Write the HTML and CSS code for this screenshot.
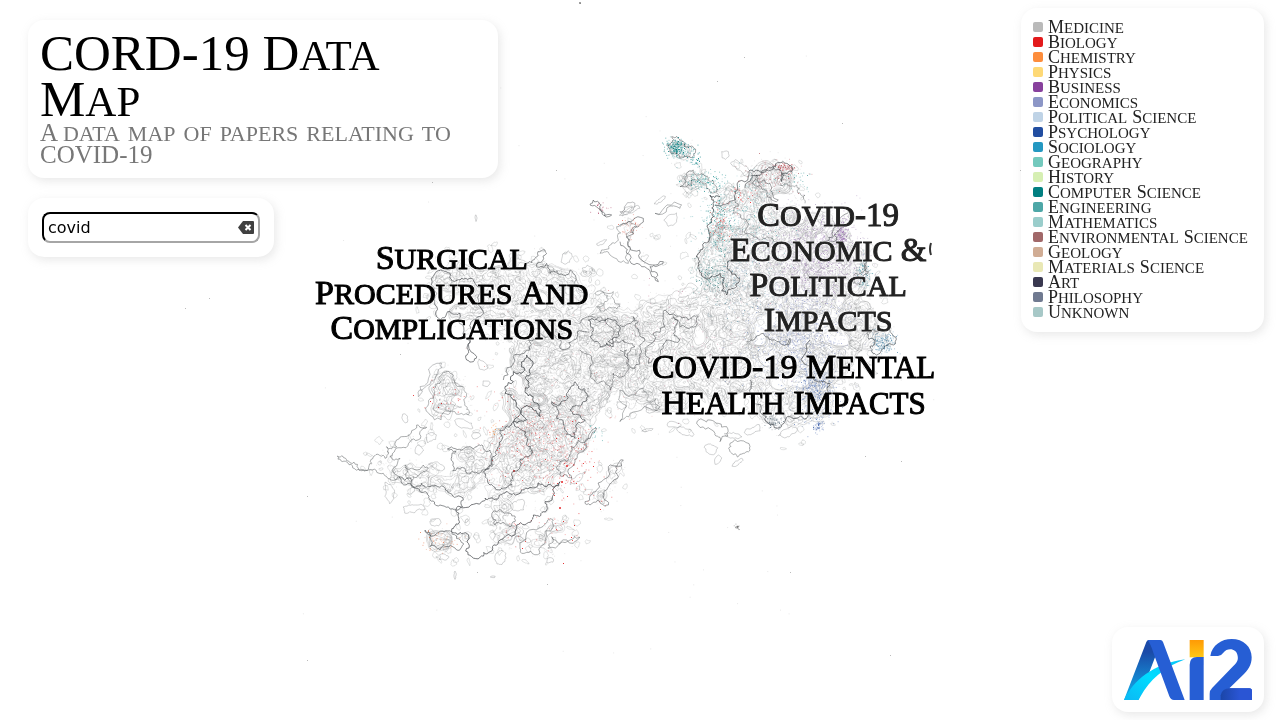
FILE: index.html
```html
<!DOCTYPE html>
<html lang="en">
<head>
<meta charset="utf-8">
<title>CORD-19 Data Map</title>
<link rel="stylesheet" href="styles.css">
</head>
<body>
<div class="map">
  <canvas class="map-canvas" id="map" width="1280" height="720"></canvas>
  <div class="label label-surgical"><span class="word">Surgical</span><br><span class="word">Procedures</span> <span class="word">And</span><br><span class="word">Complications</span></div>
  <div class="label label-economic"><span class="word">Covid</span>-19<br><span class="word">Economic</span> &amp;<br><span class="word">Political</span><br><span class="word">Impacts</span></div>
  <div class="label label-mental"><span class="word">Covid</span>-19 <span class="word">Mental</span><br><span class="word">Health</span> <span class="word">Impacts</span></div>
</div>
<main class="overlay">
  <div class="side">
    <header class="card title-card">
      <h1>CORD-19 <span class="word">Data</span><br><span class="word">Map</span></h1>
      <p>A <span class="small">data map of papers relating to</span> COVID-19</p>
    </header>
    <form class="card search-card" role="search">
      <input class="search" type="text" value="covid" aria-label="Search papers">
      <button class="clear" type="reset" aria-label="Clear search">
        <svg viewBox="0 0 16 13" width="16" height="13"><path d="M5 0H15Q16 0 16 1V12Q16 13 15 13H5L0 6.500Z" fill="#404040"/><path d="M7.500 4L12.500 9M12.500 4L7.500 9" stroke="#fff" stroke-width="2"/></svg>
      </button>
    </form>
  </div>
  <div class="side side-right">
    <ul class="card legend">
      <li><i class="swatch c1"></i><span class="word">Medicine</span></li>
      <li><i class="swatch c2"></i><span class="word">Biology</span></li>
      <li><i class="swatch c3"></i><span class="word">Chemistry</span></li>
      <li><i class="swatch c4"></i><span class="word">Physics</span></li>
      <li><i class="swatch c5"></i><span class="word">Business</span></li>
      <li><i class="swatch c6"></i><span class="word">Economics</span></li>
      <li><i class="swatch c7"></i><span class="word">Political</span> <span class="word">Science</span></li>
      <li><i class="swatch c8"></i><span class="word">Psychology</span></li>
      <li><i class="swatch c9"></i><span class="word">Sociology</span></li>
      <li><i class="swatch c10"></i><span class="word">Geography</span></li>
      <li><i class="swatch c11"></i><span class="word">History</span></li>
      <li><i class="swatch c12"></i><span class="word">Computer</span> <span class="word">Science</span></li>
      <li><i class="swatch c13"></i><span class="word">Engineering</span></li>
      <li><i class="swatch c14"></i><span class="word">Mathematics</span></li>
      <li><i class="swatch c15"></i><span class="word">Environmental</span> <span class="word">Science</span></li>
      <li><i class="swatch c16"></i><span class="word">Geology</span></li>
      <li><i class="swatch c17"></i><span class="word">Materials</span> <span class="word">Science</span></li>
      <li><i class="swatch c18"></i><span class="word">Art</span></li>
      <li><i class="swatch c19"></i><span class="word">Philosophy</span></li>
      <li><i class="swatch c20"></i><span class="word">Unknown</span></li>
    </ul>
    <div class="card logo-card">
      <svg class="logo" viewBox="72 57 384 183" role="img" aria-label="Ai2">
        <defs>
          <linearGradient id="leg" x1="0" y1="0" x2="0" y2="1"><stop offset="0.2" stop-color="#1b4aa8"/><stop offset="1" stop-color="#10b4ee"/></linearGradient>
          <linearGradient id="swoosh" x1="0" y1="1" x2="1" y2="0"><stop offset="0" stop-color="#0bb8f4"/><stop offset="0.5" stop-color="#00dcff"/><stop offset="1" stop-color="#08c4f8"/></linearGradient>
          <linearGradient id="dot" x1="0" y1="0" x2="0" y2="1"><stop offset="0" stop-color="#ff9a05"/><stop offset="1" stop-color="#ffc814"/></linearGradient>
          <linearGradient id="base"><stop offset="0" stop-color="#1b46a8"/><stop offset="0.6" stop-color="#2a55d4"/></linearGradient>
        </defs>
        <path d="M72 240L139 66Q141 60 147 60L168 104L116 240Z" fill="url(#leg)"/>
        <path d="M72 240C100 182 158 132 256 118C190 142 150 180 121 230Q116 240 106 240Z" fill="url(#swoosh)"/>
        <path d="M143 60H181Q187 60 189 66L254 240H222Q212 240 208 229L160 98Q152 72 143 60Z" fill="#265ed4"/>
        <path d="M269 60H311V112H269Z" fill="url(#dot)"/>
        <path d="M269 240V134Q269 112 291 111H311V240Z" fill="#265ed4"/>
        <path d="M331 108C336 75 365 57 395 57C430 57 455 80 455 112C455 135 445 150 425 169L388 205H448Q456 205 456 213V240H329V222Q329 210 337 203L400 138C412 127 415 120 413 108C410 84 382 82 370 98Q363 108 354 108Z" fill="#265ed4"/>
        <path d="M362 240V226Q366 205 390 205H448Q456 205 456 213V240Z" fill="url(#base)"/>
      </svg>
    </div>
  </div>
</main>
<script src="map.js"></script>
</body>
</html>
```
FILE: styles.css
```css
* { box-sizing: border-box; }
body {
  margin: 0;
  background: #fff;
  color: #000;
  font-family: "Liberation Serif", serif;
  overflow: hidden;
}
.map { position: absolute; inset: 0; overflow: hidden; }
.map-canvas { display: block; width: 100%; height: 100%; }

/* Words in small capitals with a slightly taller initial */
.word {
  display: inline-block;
  font-variant-caps: small-caps;
  line-height: 0;
}

.label {
  position: absolute;
  transform: translateX(-50%);
  text-align: center;
  white-space: nowrap;
  font-size: 33px;
  line-height: 35px;
  -webkit-text-stroke: 1px currentColor;
  text-shadow: 0 0 2px #fff, 0 0 3px #fff, 0 0 4px #fff;
}
.label .word { font-size: 43px; }
.label .word::first-letter { font-size: 34px; }
.label-surgical { left: 35.3%; top: 33.5%; }
.label-economic { left: 64.7%; top: 27.5%; color: #222; }
.label-mental { left: 62%; top: 48.5%; font-size: 34px; line-height: 36px; }
.label-mental .word { font-size: 44px; }

.overlay {
  position: relative;
  display: flex;
  justify-content: space-between;
  min-height: 100vh;
  padding: 8px 16px 8px 28px;
}
.side {
  display: flex;
  flex-direction: column;
  align-items: flex-start;
  gap: 20px;
  width: 38%;
  padding-top: 12px;
}
.side-right {
  width: auto;
  align-items: flex-end;
  justify-content: space-between;
  padding-top: 0;
}
.card {
  margin: 0;
  padding: 12px;
  border-radius: 16px;
  background: #fff;
  box-shadow: 2px 3px 10px #aaaaaa44;
}
.title-card { width: 100%; padding-top: 10px; }
h1 {
  margin: 0;
  font-size: 51px;
  font-weight: 400;
  line-height: 46px;
}
h1 .word { font-size: 61px; }
h1 .word::first-letter { font-size: 51px; }
.title-card p {
  margin: 0;
  font-size: 25px;
  line-height: 22px;
  color: #777;
}
.small { font-size: 32px; line-height: 0; font-variant-caps: small-caps; }

.search-card { position: relative; padding: 14px; }
.search {
  display: block;
  width: 218px;
  height: 31px;
  padding: 0 28px 0 4px;
  border: 2px solid;
  border-color: #000 #a6a6a6 #a6a6a6 #000;
  border-radius: 8px;
  background: #fff;
  font-family: "DejaVu Sans", sans-serif;
  font-size: 16px;
}
.clear {
  position: absolute;
  right: 20px;
  top: 23px;
  padding: 0;
  border: 0;
  background: none;
  line-height: 0;
}

.legend {
  min-width: 243px;
  padding: 11px 12px 13px;
  list-style: none;
  color: #222;
}
.legend li {
  display: flex;
  align-items: center;
  gap: 5px;
  height: 15px;
  line-height: 15px;
}
.legend .word { font-size: 21px; line-height: 14px; }
.legend .word::first-letter { font-size: 18px; }
.swatch { width: 10px; height: 10px; border-radius: 2px; }
.c1 { background: #bababa; }
.c2 { background: #e31a1c; }
.c3 { background: #fd8d3c; }
.c4 { background: #fed976; }
.c5 { background: #88419d; }
.c6 { background: #8c96c6; }
.c7 { background: #bfd3e6; }
.c8 { background: #224ea1; }
.c9 { background: #2498c1; }
.c10 { background: #73c9bd; }
.c11 { background: #d6efb3; }
.c12 { background: #017f81; }
.c13 { background: #4da7a7; }
.c14 { background: #9acdcb; }
.c15 { background: #a16869; }
.c16 { background: #d0ac94; }
.c17 { background: #e9e8b5; }
.c18 { background: #39384f; }
.c19 { background: #707a90; }
.c20 { background: #a7c8c7; }
.logo { display: block; width: 128px; height: 61px; }
```
FILE: map.js
```js
const W = 1280, H = 720;
const ctx = document.getElementById('map').getContext('2d');

let seed = 20;
function rnd() {
  seed = (seed * 1664525 + 1013904223) >>> 0;
  return seed / 4294967296;
}
function gauss() {
  return rnd() + rnd() + rnd() + rnd() - 2;
}

// Areas covered by papers, as [density, x, y, x, y, ...]
const areas = [
  [.5, 436,272, 450,262, 475,265, 500,255, 530,262, 545,252, 560,268, 578,285, 585,305, 570,330, 555,350, 520,345, 495,330, 465,318, 440,315],
  [1, 512,365, 525,345, 560,320, 600,318, 640,325, 648,345, 636,375, 610,390, 590,415, 560,435, 545,460, 515,470, 492,455, 505,425, 512,390],
  [.4, 372,466, 390,450, 420,425, 425,432, 400,455, 402,465, 430,468, 450,480, 462,500, 425,490, 400,480],
  [.5, 455,470, 460,450, 485,446, 500,460, 560,440, 585,400, 590,420, 575,460, 550,490, 530,520, 495,555, 470,550, 455,530, 458,505],
  [.45, 432,415, 432,395, 445,372, 463,390, 468,414],
  [.5, 426,530, 455,532, 463,548, 430,551],
  [.4, 520,550, 545,525, 555,520, 575,538, 545,550],
  [.4, 590,500, 608,470, 623,460, 615,490, 605,505],
  [.35, 560,510, 565,470, 575,440, 595,428, 580,465],
  [.7, 714,195, 745,180, 752,168, 788,164, 795,185, 805,210, 835,220, 850,240, 868,270, 855,295, 890,328, 890,346, 862,358, 830,385, 828,412, 800,420, 775,427, 755,405, 745,380, 738,350, 710,330, 708,295, 700,265, 712,240],
  [.55, 590,345, 610,320, 650,305, 710,285, 740,340, 750,400, 690,410, 640,412, 618,385],
  [.9, 667,143, 674,137, 695,153, 680,158],
  [.6, 682,186, 692,172, 716,188, 716,194],
  [.2, 616,240, 635,220, 645,250, 660,278, 640,262],
  [.2, 550,280, 585,260, 600,290, 620,310, 590,315]
];

const maskCanvas = document.createElement('canvas');
maskCanvas.width = W;
maskCanvas.height = H;
const mc = maskCanvas.getContext('2d', { willReadFrequently: true });
mc.filter = 'blur(6px)';
for (const a of areas) {
  mc.fillStyle = 'rgba(0,0,0,' + a[0] + ')';
  mc.beginPath();
  for (let i = 1; i < a.length; i += 2) mc.lineTo(a[i], a[i + 1]);
  mc.fill();
}
const mask = mc.getImageData(0, 0, W, H).data;
function density(x, y) {
  return mask[((y | 0) * W + (x | 0)) * 4 + 3] / 255;
}

// Value noise
const table = Array.from({ length: 4096 }, rnd);
function noise(x, y) {
  const xi = Math.floor(x), yi = Math.floor(y);
  let u = x - xi, v = y - yi;
  u = u * u * (3 - 2 * u);
  v = v * v * (3 - 2 * v);
  const t = (a, b) => table[((a * 73 + b * 179) ^ (a * b)) & 4095];
  const p = t(xi, yi) * (1 - u) + t(xi + 1, yi) * u;
  const q = t(xi, yi + 1) * (1 - u) + t(xi + 1, yi + 1) * u;
  return p * (1 - v) + q * v;
}
// Density broken up by sparse patches
function patchy(x, y) {
  const d = density(x, y), n = noise(x / 20 + 7, y / 20 + 40);
  return d * Math.min(1, Math.max(0, (n - .34 + d * .3) * 4));
}

// Contour lines by marching squares
const step = 2, x0 = 330, y0 = 120, nx = 290, ny = 240;
function field(scale, shift) {
  const f = new Float32Array(nx * ny);
  for (let j = 0; j < ny; j++) for (let i = 0; i < nx; i++) {
    const x = x0 + i * step, y = y0 + j * step;
    const n = noise(x / scale + shift, y / scale) * .7 + noise(x / 4 + shift, y / 4) * .3;
    const d = patchy(x, y);
    f[j * nx + i] = d < .02 ? 0 : n * (.35 + d * .65) + Math.min(d, .4) * .35;
  }
  return f;
}
function contour(f, level, color) {
  ctx.strokeStyle = color;
  ctx.lineWidth = 1;
  ctx.beginPath();
  for (let j = 0; j < ny - 1; j++) for (let i = 0; i < nx - 1; i++) {
    const a = f[j * nx + i], b = f[j * nx + i + 1], c = f[(j + 1) * nx + i + 1], d = f[(j + 1) * nx + i];
    const x = x0 + i * step, y = y0 + j * step, p = [];
    if (a > level !== b > level) p.push([x + step * (level - a) / (b - a), y]);
    if (b > level !== c > level) p.push([x + step, y + step * (level - b) / (c - b)]);
    if (c > level !== d > level) p.push([x + step * (level - d) / (c - d), y + step]);
    if (d > level !== a > level) p.push([x, y + step * (level - a) / (d - a)]);
    for (let k = 0; k + 1 < p.length; k += 2) {
      ctx.moveTo(p[k][0], p[k][1]);
      ctx.lineTo(p[k + 1][0], p[k + 1][1]);
    }
  }
  ctx.stroke();
}
const coarse = field(15, 3), fine = field(8, 90);
for (const l of [.34, .44, .56, .7]) contour(coarse, l, 'rgba(70,72,76,.19)');
for (const l of [.34, .44, .56, .7]) contour(fine, l, 'rgba(70,72,76,.14)');

// Individual papers
function dot(x, y, color, alpha, size) {
  ctx.globalAlpha = alpha;
  ctx.fillStyle = color;
  ctx.fillRect(x, y, size, size);
}
for (let i = 0; i < 120000; i++) {
  const x = 340 + rnd() * 560, y = 130 + rnd() * 440;
  if (rnd() < patchy(x, y) * .8) dot(x, y, '#888', .16, 1);
}
// [x, y, spread x, spread y, count, color]
const clusters = [
  [675,146,9,7,160,'#017f81'], [685,151,12,6,50,'#017f81'], [702,181,18,9,110,'#2b9999'], [696,160,5,5,25,'#017f81'],
  [718,225,12,30,300,'#4d9f9f'], [720,225,8,16,90,'#e06060'], [745,220,40,40,360,'#73b9bd'],
  [712,275,16,18,200,'#5d9999'], [740,285,30,30,240,'#7ea5b5'],
  [775,175,24,12,110,'#c07078'], [785,168,8,4,50,'#c05058'], [742,195,12,12,24,'#e31a1c'], [795,180,14,10,30,'#4d9f9f'],
  [820,255,34,35,1000,'#b39ac4'], [842,235,5,18,160,'#9b70b5'], [785,250,50,36,450,'#b4a4c4'],
  [805,330,38,42,850,'#a3aad2'], [815,390,16,28,600,'#6d87bd'], [785,345,42,42,380,'#9daed2'],
  [883,342,10,9,180,'#6196b5'], [864,275,6,14,100,'#4f96a5'], [818,425,4,5,34,'#3458a5'], [775,421,8,6,80,'#687985'],
  [525,440,38,36,190,'#e05050'], [560,440,35,35,130,'#ea7777'], [573,470,24,38,85,'#e31a1c'],
  [538,530,35,22,28,'#e33335'], [494,431,4,7,15,'#fd8d3c'], [440,540,18,10,45,'#e77b50'],
  [445,398,24,18,20,'#e31a1c'], [630,227,10,10,34,'#df7060'], [600,208,8,5,16,'#b45070'],
  [590,365,90,60,60,'#dfa0a0'], [690,345,70,50,120,'#d09bb0'], [597,430,10,7,14,'#4da7a7']
];
for (const [cx, cy, sx, sy, n, color] of clusters) {
  for (let i = 0; i < n; i++) dot(cx + gauss() * sx, cy + gauss() * sy, color, .3 + rnd() * .35, 1);
  for (let i = 0; i < n / 12; i++) dot(Math.round(cx + gauss() * sx), Math.round(cy + gauss() * sy), color, .8, 1);
}
for (const [x, y] of [[561,481],[559,507],[566,465],[513,470]]) dot(x, y, '#e31a1c', .7, 2);
for (const [x, y] of [[441,403],[438,407],[578,438],[556,438],[522,548],[563,563],[574,525],[593,466],[563,521],[571,537]]) dot(x, y, '#e31a1c', .9, 1);
for (const [x, y] of [[580,3],[744,57],[185,308],[307,496],[547,584],[790,572],[890,655],[842,123],[901,461],[865,456],[1020,170],[477,572],[400,354],[556,170],[209,298],[432,182],[717,81],[307,660]]) dot(x, y, '#777', .5, 1);
dot(579, 2, '#777', .7, 2);
for (let i = 0; i < 22; i++) dot(737 + gauss() * 2, 527 + gauss() * 2, '#555', .4, 1);
for (let i = 0; i < 110; i++) dot(620 + gauss() * 270, 360 + gauss() * 230, '#999', .22, 1);
ctx.globalAlpha = 1;

// Polyline roughened by midpoint displacement
function trace(points, color, width, rough, closed) {
  let p = points.slice();
  if (closed) p.push(p[0]);
  for (let k = 0; k < 3; k++) {
    const q = [p[0]];
    for (let i = 1; i < p.length; i++) {
      const a = p[i - 1], b = p[i], dx = b[0] - a[0], dy = b[1] - a[1];
      if (Math.hypot(dx, dy) > 2.5) {
        const m = (rnd() - .5) * rough;
        q.push([(a[0] + b[0]) / 2 - dy * m, (a[1] + b[1]) / 2 + dx * m]);
      }
      q.push(b);
    }
    p = q;
  }
  ctx.strokeStyle = color;
  ctx.lineWidth = width;
  ctx.lineJoin = 'round';
  ctx.beginPath();
  p.forEach(v => ctx.lineTo(v[0], v[1]));
  ctx.stroke();
}
// Small loose islands along the fringe
function island(x, y, rx, ry, tilt, color) {
  const p = [];
  for (let i = 0; i < 8; i++) {
    const t = i * Math.PI / 4, r = .6 + rnd() * .6;
    const u = Math.cos(t) * rx * r, v = Math.sin(t) * ry * r;
    p.push([x + u * Math.cos(tilt) - v * Math.sin(tilt), y + u * Math.sin(tilt) + v * Math.cos(tilt)]);
  }
  trace(p, color, 1, .4, true);
}
const islands = [
  [405,418,3,6,-.5],[390,494,5,11,-.4],[414,508,13,4,-.2],[436,522,6,5,-.6],[444,557,6,3,0],[502,558,6,7,0],
  [578,478,9,4,-.7],[486,383,4,3,0],[482,365,7,4,.6],[463,424,9,5,.4],[431,437,5,6,.5],[419,450,5,5,0],[438,466,9,4,.2],
  [476,436,5,4,0],[518,505,8,7,0],[540,425,6,5,0],[455,575,1,4,0],[493,577,3,1,0],[566,258,8,5,-.7],[588,272,6,7,.6],
  [601,243,6,2,-.5],[627,210,8,3,-.6],[632,210,10,3,-.5],[660,200,6,2,-.6],[725,155,5,4,.8],[740,167,12,4,.7],[672,220,9,5,-.5],
  [687,432,11,4,.3],[733,435,9,3,.2],[753,430,9,4,-.3],[787,432,9,5,-.4],[711,450,7,6,.4],[738,462,7,2,-.6],[718,460,3,6,.6],
  [651,408,6,4,0],[673,425,7,3,0],[647,430,6,2,-.2],[840,375,6,4,0],[870,368,8,4,.6],[855,345,6,5,.5],[850,318,7,5,0],
  [476,218,1,3,0],[550,560,4,3,0],[520,540,5,4,0],[604,400,5,8,.4],[622,405,6,4,0],[455,390,11,8,.2],[448,407,12,4,0]
];
for (const [x, y, rx, ry, t] of islands) island(x, y, rx, ry, t, 'rgba(80,85,88,.25)');
for (let i = 0; i < 1100; i++) {
  const x = 360 + rnd() * 530, y = 160 + rnd() * 405;
  if (density(x, y) > .02 || density(x - 20, y) > .1 || density(x + 20, y) > .1 || density(x, y - 20) > .1 || density(x, y + 12) > .1)
    island(x, y, 1 + rnd() * 4, 1 + rnd() * 3, rnd() * 3, 'rgba(90,92,96,.17)');
}

// Cluster borders: [strength, closed, origin x, origin y, points at three units per pixel]
const borders = [
  [.4,1,330,350, 22,318,50,332,85,355,115,358,130,320,165,325,170,290,200,290,215,260,260,225,290,232,270,245,240,275,195,300,180,320,210,325,208,380,170,380,160,370,115,360,85,358,50,336],
  [.55,1,330,350, 208,380,225,405,255,412,275,400,300,410,345,415,360,430,400,450,398,470,380,480,330,465,300,450,285,425,255,414],
  [.4,1,330,350, 225,345,280,345,295,355,285,365,250,380,240,395],
  [.5,1,330,350, 352,297,378,305,370,340,368,362,420,372,455,365,485,345,480,300,455,285,430,297,400,298],
  [.65,1,330,350, 390,470,385,500,372,530,365,545,400,550,415,580,425,620,450,622,480,605,510,570,560,525,605,510,610,495,640,485,645,455,690,395,650,410,600,412,550,430,520,430,480,445,455,455],
  [.7,1,330,350, 525,110,550,65,585,60,590,15,605,50,590,90,585,125,610,140,630,200,610,180,590,165,575,175,590,210,550,215,555,150,525,130],
  [.6,1,330,350, 510,240,545,225,550,215,575,240,590,285,605,300,595,320,570,335,545,375,545,405,510,420,480,405,465,380,460,365,490,345,500,300,515,270],
  [.6,1,330,350, 665,155,690,165,710,130,735,95,745,115,770,130,765,155,740,165,720,180,765,210,740,235,735,265,710,255,705,230,680,205],
  [.45,1,330,350, 745,270,800,235,775,265,745,310,735,335,725,385,695,380,690,335,715,330,725,290],
  [.5,1,330,350, 285,540,320,550,365,545,400,580,380,600,330,600,300,590],
  [.4,1,330,350, 570,590,620,540,670,510,670,530,630,610,575,610],
  [.4,1,330,350, 655,595,665,560,720,570,750,562,730,580],
  [.45,1,330,350, 765,455,800,420,835,350,880,330,865,380,830,420,835,465,805,450,780,465],
  [.35,1,330,350, 300,195,310,145,330,100,350,65,370,75,375,100,405,125,410,170,415,195,360,185],
  [.3,1,330,350, 265,140,270,110,335,40,325,60,275,120],
  [.45,1,330,350, 485,500,540,490,555,515,540,530,495,525],
  [.6,1,300,120, 405,460,430,452,450,475,480,480,510,475,525,490,540,560,550,580,525,600,515,630,530,710,520,725,500,720,505,690,495,650,480,580,450,575,410,590,405,530],
  [.5,0,300,120, 680,430,705,415,735,390,740,400,710,440,740,430,750,460,790,465,810,450,825,500,855,520,850,540],
  [.6,1,300,120, 865,600,900,605,945,600,960,630,940,680,900,680,870,650],
  [.35,1,300,120, 885,520,940,515,960,560,920,570,890,560,925,540],
  [.35,1,300,120, 900,400,930,375,955,360,950,320,990,305,1010,320,985,380,985,430,930,405],
  [.5,1,300,120, 870,255,880,240,900,265,935,285,925,290,895,265],
  [.45,1,620,120, 140,75,155,50,180,60,210,80,225,100,200,110,180,115,150,95],
  [.4,1,620,120, 180,200,200,160,220,150,235,165,265,180,290,200,290,215,260,205,215,180,200,200],
  [.65,0,620,120, 300,230,270,225,280,255,280,290,270,350,240,390,235,430,245,460,270,475,300,460,320,525,350,500,350,470,330,420],
  [.6,0,620,120, 285,255,325,250,345,215,385,170,390,150,440,148,490,125,515,155,485,160,485,185,480,150,440,150,395,165,375,205],
  [.45,1,620,120, 410,165,420,190,450,190,475,240,440,210,395,190],
  [.4,0,620,120, 345,235,340,280,380,300,375,340,420,360,440,350,480,380],
  [.5,0,620,120, 0,365,20,400,65,440,115,485,90,440,130,425,65,420,30,380,20,350,70,295,10,310,0,320],
  [.3,1,620,120, 0,275,45,250,40,270],
  [.35,1,620,120, 105,280,185,255,180,265],
  [.5,1,620,120, 655,320,685,270,670,320,650,360,600,365,640,350],
  [.5,1,620,120, 740,420,745,455,720,495,700,490,735,450],
  [.35,0,620,120, 480,195,530,195,555,225,555,250],
  [.5,0,620,290, 0,105,40,80,55,95,45,110,75,150,60,200,45,235,20,180,0,180],
  [.5,1,620,290, 135,60,205,90,235,80,215,110,160,80,160,130,180,150,130,175,85,220,80,170,135,110],
  [.55,1,620,290, 740,130,765,150,750,170,780,190,820,165,810,125,780,120],
  [.6,0,620,290, 390,270,390,320,440,380,470,415,510,380,560,385,600,340,630,310,630,280,580,260,570,150],
  [.5,0,620,290, 380,155,430,130,455,150,510,145,500,165],
  [.35,1,620,290, 0,300,70,295,80,330,120,350,30,370,0,395],
  [.4,1,620,290, 230,400,270,390,320,410,300,455,285,430],
  [.4,1,620,290, 330,460,390,470,370,490,335,490],
  [.45,0,580,310, 0,40,50,25,90,50,85,95,130,90,165,110,145,150,125,200,100,190,90,240,50,220,40,160,0,120],
  [.5,0,430,320, 220,180,250,110,300,90,320,40,375,45,390,85,430,60,470,35]
];
for (const b of borders) {
  const p = [];
  for (let i = 4; i < b.length; i += 2) p.push([b[2] + b[i] / 3, b[3] + b[i + 1] / 3]);
  trace(p, 'rgba(50,54,58,' + b[0] + ')', 1, .65, b[1] === 1);
}

// Edge of a glyph cut off at the label boundary
ctx.strokeStyle = '#333';
ctx.lineWidth = 2;
ctx.beginPath();
ctx.moveTo(931, 243);
ctx.quadraticCurveTo(929, 249, 931, 255);
ctx.stroke();
```
